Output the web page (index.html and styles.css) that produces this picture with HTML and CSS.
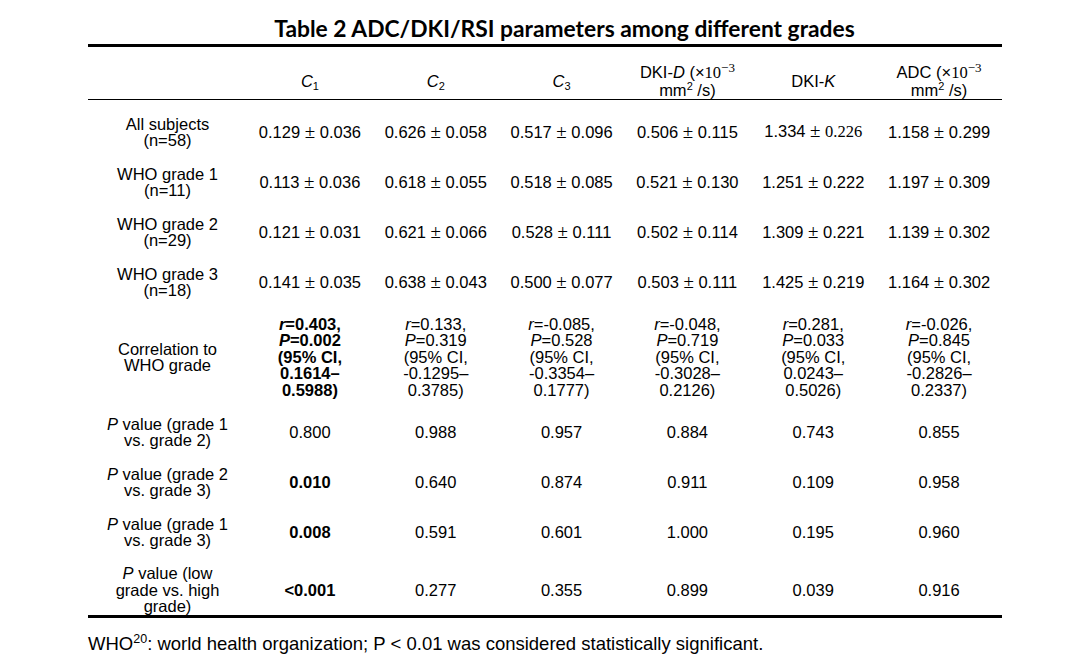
FILE: index.html
```html
<!DOCTYPE html>
<html lang="en">
<head>
<meta charset="utf-8">
<title>Table 2</title>
<link rel="stylesheet" href="styles.css">
</head>
<body>
<div class="page">
  <h1 class="title">Table 2 ADC/DKI/RSI parameters among different grades</h1>
  <table class="data">
    <colgroup>
      <col class="c-label"><col><col><col><col><col><col>
    </colgroup>
    <thead>
      <tr>
        <th></th>
        <th><i>C</i><sub>1</sub></th>
        <th><i>C</i><sub>2</sub></th>
        <th><i>C</i><sub>3</sub></th>
        <th>DKI-<i>D</i> (×<span class="m">10<sup class="exp">−3</sup></span><br>mm<sup>2</sup> /s)</th>
        <th>DKI-<i>K</i></th>
        <th>ADC (×<span class="m">10<sup class="exp">−3</sup></span><br>mm<sup>2</sup> /s)</th>
      </tr>
    </thead>
    <tbody>
      <tr class="r-first">
        <td>All subjects<br>(n=58)</td>
        <td>0.129 <span class="pm">±</span> 0.036</td>
        <td>0.626 <span class="pm">±</span> 0.058</td>
        <td>0.517 <span class="pm">±</span> 0.096</td>
        <td>0.506 <span class="pm">±</span> 0.115</td>
        <td>1.334 <span class="pm">±</span> <span class="m">0.226</span></td>
        <td>1.158 <span class="pm">±</span> 0.299</td>
      </tr>
      <tr class="r2">
        <td>WHO grade 1<br>(n=11)</td>
        <td>0.113 <span class="pm">±</span> 0.036</td>
        <td>0.618 <span class="pm">±</span> 0.055</td>
        <td>0.518 <span class="pm">±</span> 0.085</td>
        <td>0.521 <span class="pm">±</span> 0.130</td>
        <td>1.251 <span class="pm">±</span> 0.222</td>
        <td>1.197 <span class="pm">±</span> 0.309</td>
      </tr>
      <tr class="r2">
        <td>WHO grade 2<br>(n=29)</td>
        <td>0.121 <span class="pm">±</span> 0.031</td>
        <td>0.621 <span class="pm">±</span> 0.066</td>
        <td>0.528 <span class="pm">±</span> 0.111</td>
        <td>0.502 <span class="pm">±</span> 0.114</td>
        <td>1.309 <span class="pm">±</span> 0.221</td>
        <td>1.139 <span class="pm">±</span> 0.302</td>
      </tr>
      <tr class="r2">
        <td>WHO grade 3<br>(n=18)</td>
        <td>0.141 <span class="pm">±</span> 0.035</td>
        <td>0.638 <span class="pm">±</span> 0.043</td>
        <td>0.500 <span class="pm">±</span> 0.077</td>
        <td>0.503 <span class="pm">±</span> 0.111</td>
        <td>1.425 <span class="pm">±</span> 0.219</td>
        <td>1.164 <span class="pm">±</span> 0.302</td>
      </tr>
      <tr class="r-corr">
        <td>Correlation to<br>WHO grade</td>
        <td class="b"><i>r</i>=0.403,<br><i>P</i>=0.002<br>(95% CI,<br>0.1614–<br>0.5988)</td>
        <td><i>r</i>=0.133,<br><i>P</i>=0.319<br>(95% CI,<br>-0.1295–<br>0.3785)</td>
        <td><i>r</i>=-0.085,<br><i>P</i>=0.528<br>(95% CI,<br>-0.3354–<br>0.1777)</td>
        <td><i>r</i>=-0.048,<br><i>P</i>=0.719<br>(95% CI,<br>-0.3028–<br>0.2126)</td>
        <td><i>r</i>=0.281,<br><i>P</i>=0.033<br>(95% CI,<br>0.0243–<br>0.5026)</td>
        <td><i>r</i>=-0.026,<br><i>P</i>=0.845<br>(95% CI,<br>-0.2826–<br>0.2337)</td>
      </tr>
      <tr class="r2">
        <td><i>P</i> value (grade 1<br>vs. grade 2)</td>
        <td>0.800</td><td>0.988</td><td>0.957</td><td>0.884</td><td>0.743</td><td>0.855</td>
      </tr>
      <tr class="r2">
        <td><i>P</i> value (grade 2<br>vs. grade 3)</td>
        <td class="b">0.010</td><td>0.640</td><td>0.874</td><td>0.911</td><td>0.109</td><td>0.958</td>
      </tr>
      <tr class="r2">
        <td><i>P</i> value (grade 1<br>vs. grade 3)</td>
        <td class="b">0.008</td><td>0.591</td><td>0.601</td><td>1.000</td><td>0.195</td><td>0.960</td>
      </tr>
      <tr class="r-last">
        <td><i>P</i> value (low<br>grade vs. high<br>grade)</td>
        <td class="b">&lt;0.001</td><td>0.277</td><td>0.355</td><td>0.899</td><td>0.039</td><td>0.916</td>
      </tr>
    </tbody>
  </table>
  <p class="note">WHO<sup>20</sup>: world health organization; P &lt; 0.01 was considered statistically significant.</p>
</div>
</body>
</html>
```

FILE: styles.css
```css
html, body {
  margin: 0;
  padding: 0;
  background: #fff;
  color: #000;
}

.page {
  padding: 15px 0 0 88px;
  width: 914px;
  font-family: "Liberation Sans", Arial, sans-serif;
  font-size: 16.5px;
}

.title {
  margin: 0 0 3px 0;
  padding-left: 39px;
  height: 26px;
  text-align: center;
  font-family: Lato, "Open Sans", sans-serif;
  font-weight: 700;
  font-size: 22.8px;
  line-height: 26px;
}

.data {
  width: 914px;
  table-layout: fixed;
  border-collapse: separate;
  border-spacing: 0;
  border-top: 3px solid #000;
  border-bottom: 3px solid #000;
}

.c-label {
  width: 159px;
}

.data th,
.data td {
  padding: 0;
  text-align: center;
  vertical-align: middle;
  line-height: 16.5px;
  font-weight: 400;
}

.data thead tr {
  height: 50px;
}

.data th {
  padding-top: 17px;
  padding-bottom: 1px;
  border-bottom: 1px solid #000;
}

.data sub {
  font-size: 11px;
  vertical-align: -3px;
  line-height: 0;
}

.data sup {
  font-size: 11px;
  vertical-align: 6px;
  line-height: 0;
}

.data sup.exp {
  font-size: 13px;
  vertical-align: 6px;
}

.m {
  font-family: "Liberation Serif", "DejaVu Serif", serif;
}

.pm {
  font-family: "Liberation Serif", serif;
  font-size: 19px;
  line-height: 0;
}

.r-first {
  height: 57px;
}

.r-first td {
  padding-top: 7px;
}

.r2 {
  height: 50px;
}

.r-corr {
  height: 100px;
}

.r-last {
  height: 58px;
}

.r-last td {
  padding-top: 8px;
}

.data .b {
  font-weight: 700;
}

.note {
  margin: 15px 0 0 0;
  font-size: 18.5px;
  line-height: 21px;
}

.note sup {
  font-size: 12.5px;
  vertical-align: 7px;
  line-height: 0;
}
```
